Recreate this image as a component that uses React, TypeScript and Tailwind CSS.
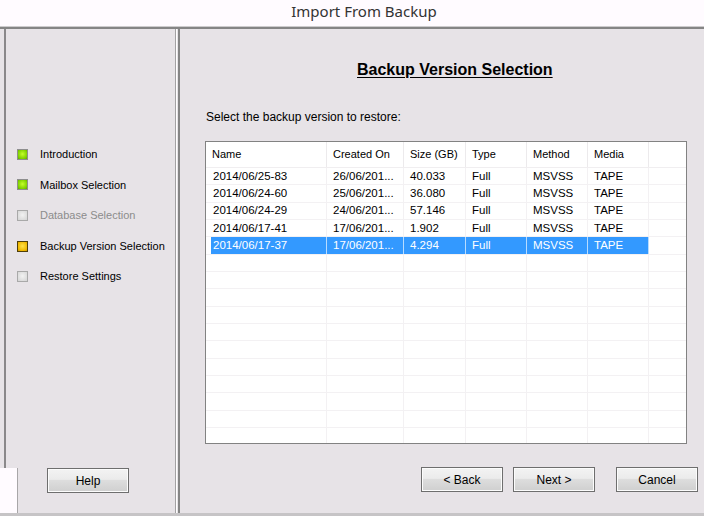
import React from 'react';

type Step = { label: string; state: 'done' | 'disabled' | 'current' | 'pending' };

const steps: Step[] = [
  { label: 'Introduction', state: 'done' },
  { label: 'Mailbox Selection', state: 'done' },
  { label: 'Database Selection', state: 'disabled' },
  { label: 'Backup Version Selection', state: 'current' },
  { label: 'Restore Settings', state: 'pending' },
];

const rows = [
  ['2014/06/25-83', '26/06/201...', '40.033', 'Full', 'MSVSS', 'TAPE'],
  ['2014/06/24-60', '25/06/201...', '36.080', 'Full', 'MSVSS', 'TAPE'],
  ['2014/06/24-29', '24/06/201...', '57.146', 'Full', 'MSVSS', 'TAPE'],
  ['2014/06/17-41', '17/06/201...', '1.902', 'Full', 'MSVSS', 'TAPE'],
  ['2014/06/17-37', '17/06/201...', '4.294', 'Full', 'MSVSS', 'TAPE'],
];

const headers = ['Name', 'Created On', 'Size (GB)', 'Type', 'Method', 'Media'];
const widths = ['w-[121px]', 'w-[77px]', 'w-[62px]', 'w-[61px]', 'w-[61px]', 'w-[61px]'];

const StepBox: React.FC<{ state: Step['state'] }> = ({ state }) => {
  if (state === 'done') {
    return (
      <span className="shrink-0 w-[11px] h-[11px] border border-[#8e8e8e] bg-[radial-gradient(circle_at_50%_45%,#c4ff2a,#7fcf00_70%,#5fa800)]" />
    );
  }
  if (state === 'current') {
    return (
      <span className="shrink-0 w-[11px] h-[11px] border border-[#4f3f0a] bg-[radial-gradient(circle_at_50%_45%,#ffe24a,#f0b800_70%,#c89400)]" />
    );
  }
  return (
    <span className="shrink-0 w-[11px] h-[11px] border border-[#a9a9a9] bg-[radial-gradient(circle_at_50%_45%,#f2f2f2,#d4d4d4)]" />
  );
};

const WinButton: React.FC<{ label: string; className?: string }> = ({ label, className }) => (
  <button
    className={`w-[82px] h-[25px] border border-[#6e6e6e] bg-[linear-gradient(#f3f3f3,#ebebeb_45%,#dddddd_50%,#cfcfcf)] text-[12px] text-black shadow-[inset_0_0_0_1px_#fcfcfc] ${className ?? ''}`}
  >
    {label}
  </button>
);

const App: React.FC = () => {
  return (
    <div className="w-[704px] h-[516px] overflow-hidden bg-[#e7e3e7] flex flex-col font-['Liberation_Sans',Arial,sans-serif] text-black">
      {/* title bar */}
      <div className="h-[26px] bg-[#fffbff] flex items-center justify-center pl-[24px] pb-[4px] text-[15px] text-[#333] font-['Noto_Sans',sans-serif]">
        Import From Backup
      </div>
      <div className="h-[1px] bg-[#cdcbcd]" />
      <div className="h-[2px] bg-[#858585]" />

      <div className="flex flex-1 min-h-0">
        {/* left wizard steps */}
        <div className="w-[176px] flex flex-col border-r border-[#a3a1a3]">
          <div className="flex-1 ml-[4px] border-l-2 border-[#8a888a] pt-[110px]">
            {steps.map(s => (
              <div key={s.label} className="h-[30.6px] flex items-center pl-[11px] whitespace-nowrap">
                <StepBox state={s.state} />
                <span
                  className={`ml-[12px] text-[11px] ${s.state === 'disabled' ? 'text-[#8c8c8c]' : 'text-black'}`}
                >
                  {s.label}
                </span>
              </div>
            ))}
          </div>
          <div className="h-[45px] flex">
            <div className="w-[18px] h-full bg-[#fffbff] border-r border-[#a8a6a8]" />
            <WinButton label="Help" className="ml-[29px]" />
          </div>
        </div>
        <div className="w-[1px] bg-white" />
        <div className="w-[1px]" />

        {/* main content */}
        <div className="flex-1 border-l-2 border-[#858585] flex flex-col">
          <div className="mt-[31px] pl-[177px] h-[20px] flex items-center whitespace-nowrap">
            <span className="text-[16px] font-bold underline underline-offset-2">Backup Version Selection</span>
          </div>
          <div className="mt-[30px] ml-[26px] text-[12px] leading-[15px]">Select the backup version to restore:</div>

          <div className="mt-[16px] ml-[25px] w-[482px] h-[303px] border border-[#828282] bg-white overflow-hidden">
            <div className="h-[26px] flex border-b border-[#f0eef0]">
              {headers.map((h, i) => (
                <div
                  key={h}
                  className={`${widths[i]} h-full flex items-center pl-[6px] text-[11px] border-r border-[#eceaec]`}
                >
                  {h}
                </div>
              ))}
            </div>
            {Array.from({ length: 16 }).map((_, r) => {
              const row = rows[r];
              const selected = r === 4;
              return (
                <div key={r} className="h-[17.33px] flex border-b border-[#f3f1f3]">
                  {widths.map((w, i) => (
                    <div
                      key={i}
                      className={`${w} h-full flex items-center text-[11.5px] border-r ${
                        selected ? 'border-[#b8dcff]' : 'border-[#f3f1f3]'
                      }`}
                    >
                      {row ? (
                        <div
                          className={`h-full w-full flex items-center ${i === 0 ? 'ml-[5px] pl-[2px]' : 'pl-[6px]'} ${
                            selected ? 'bg-[#3399ff] text-white' : ''
                          }`}
                        >
                          {row[i]}
                        </div>
                      ) : null}
                    </div>
                  ))}
                </div>
              );
            })}
          </div>

          <div className="mt-[23px] flex ml-[241px]">
            <WinButton label="< Back" />
            <WinButton label="Next >" className="ml-[10px]" />
            <WinButton label="Cancel" className="ml-[21px]" />
          </div>
        </div>
      </div>
      <div className="h-[3px] bg-[#c6c4c6]" />
    </div>
  );
};

export default App;
